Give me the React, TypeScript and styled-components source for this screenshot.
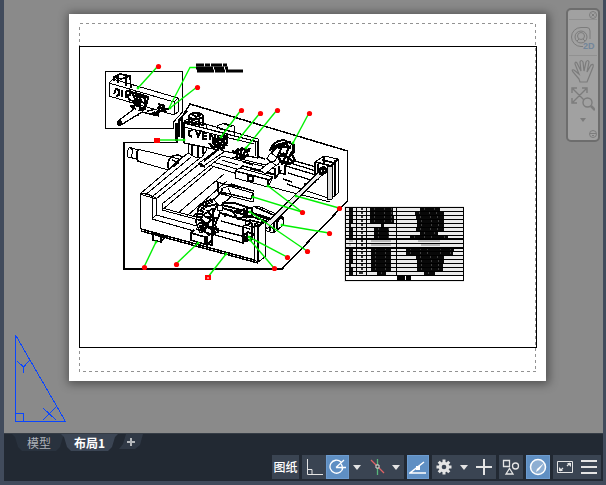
import React from "react";
import styled, { createGlobalStyle, css } from "styled-components";

const GlobalStyle = createGlobalStyle`
  * { box-sizing: border-box; }
  body { margin: 0; background: #3c4656; }
  button { font: inherit; color: inherit; border: 0; padding: 0; background: none; }
  svg { display: block; }
`;

const Shell = styled.div`
  display: flex;
  flex-direction: column;
  min-height: 100vh;
  padding: 0 3px 4px 4px;
  background: #414b5c;
  font: 12px/16px "Noto Sans CJK SC", "Liberation Sans", sans-serif;
  color: #fff;
`;

const Workspace = styled.main`
  position: relative;
  flex: 1;
  padding: 14px 57px 0 65px;
  background: #8a8a8a;
  overflow: hidden;
`;

const Paper = styled.div`
  background: #fff;
  box-shadow: 1px 1px 9px 2px rgba(0, 0, 0, 0.42);
  svg { width: 100%; height: auto; }
`;

const AxisMarker = styled.div`
  position: absolute;
  left: 10px;
  bottom: 10px;
`;

const NavPanel = styled.nav`
  position: absolute;
  top: 8px;
  right: 3px;
  width: 34px;
  display: flex;
  flex-direction: column;
  align-items: center;
  border: 2px solid #6d6d6d;
  border-radius: 5px;
  background: #a1a1a1;
  color: #7c7c7c;
`;

const NavButton = styled.button<{ $height: number; $line?: boolean; $end?: boolean }>`
  width: 28px;
  height: ${(p) => p.$height}px;
  display: flex;
  align-items: center;
  justify-content: ${(p) => (p.$end ? "flex-end" : "center")};
  border-bottom: ${(p) => (p.$line ? "1px solid #919191" : "0")};
`;

const Footer = styled.footer`
  display: flex;
  flex-direction: column;
  background: #222933;
  border-top: 1px solid #353c45;
`;

const TabStrip = styled.div`
  display: flex;
  height: 17px;
  padding-left: 8px;
`;

const Tab = styled.button<{ $active?: boolean }>`
  height: 17px;
  width: ${(p) => (p.$active ? 57 : 54)}px;
  margin-right: ${(p) => (p.$active ? 0 : -5)}px;
  color: ${(p) => (p.$active ? "#fff" : "#adb1b8")};
  font-weight: ${(p) => (p.$active ? 700 : 400)};
  line-height: 16px;
  background: ${(p) => (p.$active ? "#3b4554" : "#29323e")};
  clip-path: polygon(0 0, 100% 0, calc(100% - 3px) 3px, calc(100% - 6px) 13px, calc(100% - 10px) 100%, 10px 100%, 6px 13px, 3px 3px);
`;

const AddTab = styled.button`
  width: 24px;
  height: 15px;
  margin-left: 1px;
  display: flex;
  align-items: center;
  justify-content: center;
  background: #303946;
  color: #b5b8bc;
  clip-path: polygon(7px 0, 100% 0, calc(100% - 3px) 11px, calc(100% - 8px) 100%, 0 100%, 4px 10px);
`;

const StatusBar = styled.div`
  display: flex;
  justify-content: flex-end;
  gap: 3px;
  padding: 4px 2px 2px;
`;

const Group = styled.div`
  display: flex;
  background: #3a4452;
`;

const StatusButton = styled.button<{ $width?: number; $on?: boolean }>`
  width: ${(p) => p.$width ?? 24}px;
  height: 24px;
  display: flex;
  align-items: center;
  justify-content: center;
  color: #e4e4e4;
  overflow: hidden;
  white-space: nowrap;
  ${(p) => p.$on && css`
    background: #5f8fc3;
    border: 1px solid #6c9bcf;
    color: #fff;
  `}
`;

const PaperLabel = styled(StatusButton)`
  font-weight: 500;
  color: #fff;
`;

type Point = [number, number];
const leaders: { at: Point; to: Point[]; box?: boolean }[] = [
  { at: [158, 66], to: [[138, 88]] },
  { at: [197, 87], to: [[170, 108]] },
  { at: [157, 140], to: [[184, 140]], box: true },
  { at: [241, 110], to: [[221, 137]] },
  { at: [260, 113], to: [[238, 140]] },
  { at: [277, 110], to: [[246, 148]] },
  { at: [309, 113], to: [[293, 143]] },
  { at: [302, 212], to: [[268, 186], [253, 197]] },
  { at: [339, 208], to: [[296, 196]] },
  { at: [329, 233], to: [[282, 225]] },
  { at: [307, 251], to: [[250, 212]] },
  { at: [287, 257], to: [[249, 237]] },
  { at: [274, 268], to: [[250, 240]] },
  { at: [144, 267], to: [[156, 242]] },
  { at: [176, 264], to: [[198, 243]] },
  { at: [208, 277], to: [[226, 254]], box: true },
];

/* Left edge and width of the lettering in the last two columns of each row. */
const partRows: [number, number, number, number][] = [
  [370, 23, 420, 20], [370, 23, 415, 29], [370, 24, 416, 28], [370, 24, 417, 27],
  [381, 3, 417, 27], [374, 15, 416, 28], [374, 15, 420, 18], [374, 15, 410, 38],
  [371, 20, 418, 22], [371, 20, 421, 19], [371, 20, 406, 48], [371, 20, 406, 47],
  [371, 20, 416, 28], [371, 20, 417, 27], [371, 20, 417, 26], [371, 20, 417, 26],
  [377, 9, 424, 11],
];

function Lettering({ x, y, w, pale }: { x: number; y: number; w: number; pale?: boolean }) {
  return (
    <g>
      <path d={`M${x} ${y + 2}h${w}`} stroke={pale ? "#888" : "#080808"} strokeWidth={pale ? 1 : 4} />
      {!pale && w > 8 && <path d={`M${x + 4} ${y + 2}h${w - 4}`} stroke="#777" strokeDasharray="1 9 1 6 1 12" />}
    </g>
  );
}

function PartsList() {
  return (
    <g>
      <path d="M344 206h120v76h-120z" fill="#ebebeb" />
      <path d="M346 276h117v4h-117z" fill="#fff" />
      {partRows.map(([a, aw, b, bw], i) => {
        const y = 207 + i * 4;
        const pale = i === 8 || i === 9;
        return (
          <g key={i}>
            <Lettering x={349} y={y} w={i % 5 === 4 ? 2 : 4} pale={pale} />
            <path d={`M${i === 16 ? 359 : 361} ${y + 2}h${i === 16 ? 4 : 2}`} stroke="#333" strokeWidth="2" />
            <Lettering x={a} y={y} w={aw} pale={pale} />
            <Lettering x={b} y={y} w={bw} pale={pale} />
          </g>
        );
      })}
      <path d="M397 278h14" stroke="#000" strokeWidth="4" strokeDasharray="8 1 5" />
      <g stroke="#000" shapeRendering="crispEdges">
        {Array.from({ length: 18 }, (_, i) => <path key={i} d={`M345 ${207.5 + i * 4}h119`} />)}
        <path d="M345.500 207v73M356.500 207v68M366.500 207v68M396.500 207v68M463.500 207v73M345 280.500h119" />
        <path d="M345 239h119M345 248h119" strokeWidth="2" />
      </g>
    </g>
  );
}

function InsetDetail() {
  return (
    <g>
      <path d="M105.500 71.500H182.500V112L173.500 122V128.500H105.500Z" />
      <path d="M109 83L113 79L178 98L174 102Z" />
      <path d="M109 83V96L174 115L178 112V98M174 102V115" />
      <path d="M114 81V77L120 74L130 76L131 88M118 75V83M126 76V86M114 77L121 79L130 76" strokeWidth="1.700" />
      <path d="M114 94l2-5 3 1v5l-3 1M122 90v7M126 91v7M126 91h4v4h-4l5 6M132 93l4 8 2-7" strokeWidth="2" />
      <path d="M131 92l8 2 9 3-1 6-4 7-7 2-5-6 7-1-5-4 9-1M134 107l4 9M140 93v18M145 98v12M136 91l2 14M133 101l13 2M135 105l10 4M134 96l12 2" strokeWidth="2" />
      <path d="M134 109L118 121L121 125L142 112" fill="#fff" strokeWidth="1.300" />
      <circle cx="119.500" cy="123" r="2" strokeWidth="2" />
      <path d="M142 112l8 2 7-2M147 111L153 110M149 114h5" strokeWidth="1.500" />
      <path d="M158 104l7 2M157 108l12 1M155 113l11-4M160 104l-2 11M163 105l3 8M154 112l5 4M153 115h6" strokeWidth="2.300" />
    </g>
  );
}

function Machine() {
  return (
    <g>
      <path d="M124 142.500H177V125L190 104L347.500 151V201L282 269H124Z" strokeWidth="1.500" />
      {/* drive cylinder */}
      <path d="M137 149L179 159L168 170L137 161Z" fill="#fff" />
      <path d="M137 150L130 147Q126 151 128 157L137 159M130 147l3 4-2 6" fill="#fff" />
      <path d="M139 149Q134 155 138 161M171 157q-5 6-2 13M171 157q7-4 11 0l-8 10M172 160l7 3" strokeWidth="1.500" />
      {/* left rails */}
      <path d="M140 194L188 153M144 196L191 157M153 196L200 158M156 199L204 160M162 204L222 156M162 210L213 167M178 213L224 174M187 216L227 181M192 217L228 187" />
      <path d="M140 194V229M140 194L156 199V215M152 198V219L156 215M162 204V210L199 220M152 219L194 231M156 215L197 226M162 208L200 218M140 194l5-1 11 5" />
      <path d="M141 229L258 261M141 231L258 263" strokeWidth="1.500" />
      <path d="M153 233V240L161 242L166 236M161 235V242M154 234l12 3" strokeWidth="1.500" />
      {/* cross rails */}
      <path d="M209 165L244 176M213 162L250 173M222 156L274 169M232 157L270 166M222 160L238 165M228 187L250 194M230 184L252 191M226 193L253 201M253 193V202M242 179L286 191M286 191L330 202M250 169L274 175" />
      <path d="M243 162l10 3M253 155l12 4M288 159L316 167M287 162L316 171M286 166L316 175M288 173L311 180M287 184L304 190M283 179L292 182" strokeWidth="1.300" />
      {/* rear column */}
      <path d="M188 124V153L195 157H202L206 151V124Z" fill="#fff" />
      <path d="M192 128V155M198 130V157M203 127V154" strokeWidth="1.500" />
      <ellipse cx="196" cy="116" rx="7" ry="3" fill="#fff" strokeWidth="2" />
      <path d="M189 116V124M203 116V126M192 114l4 3 5-2M192 119v5M199 120v6M194 113l6 1M190 122l13 3" strokeWidth="2" />
      <path d="M179 120V137M182 117V138M179 120L187 111M176 123V141M184 122h4M184 122V142" strokeWidth="1.500" />
      {/* upper beam */}
      <path d="M184 123L258 142V158L184 143Z" fill="#fff" strokeWidth="1.300" />
      <path d="M184 121L188 119M188 119L258 139M258 139V158M255 142V156M184 127L254 144M217 129V126L224 123L234 126V136M220 129l12 3M224 124l8 3" />
      <path d="M193 130l-4 1v4l3 2M196 130l2 7 3-7M207 133h-4v6h4M204 136h3M210 140v-6l5 6v-6" strokeWidth="2" />
      <path d="M212 139l12 1 3-5v8l-5 5-8-1 5-4-6-3 10 0-5 9M218 136v12M224 134v15M214 145h13M212 142l11 8M220 137l7 9M209 143l5 6" strokeWidth="2.300" />
      <path d="M218 149L199 163L202 167L224 152" fill="#fff" />
      <path d="M204 161L219 149M201 164l4 3M199 163l3 4" strokeWidth="1.800" />
      <path d="M233 154l4-4 8-1 5 2M235 157l8 2 5-5M238 148l-1 9M242 147l-2 12M246 149l-4 9M232 151l14 5M250 148l-4 5" strokeWidth="2.200" />
      {/* clamp blocks */}
      <path d="M235 171L240 168L273 177L268 187L235 178Z" fill="#fff" />
      <path d="M235 171L270 180M268 187V181L273 177M248 176h5v5h-5zM240 168l3-2 31 8" strokeWidth="1.500" />
      <path d="M221 189L228 186L253 193V202L221 194Z" fill="#fff" />
      <path d="M221 192L251 199M228 186L231 184L254 191M251 199L253 193" strokeWidth="1.300" />
      <path d="M248 208L258 206L283 217V225L274 233L245 225Z" fill="#fff" />
      <path d="M249 212L279 221M283 217L274 222V233M277 220V229M256 215L270 220M268 226l7 3M270 219v12M255 207l28 12M240 213l32 10" strokeWidth="1.800" />
      {/* rear hand wheel */}
      <path d="M270 151Q272 141 284 140L294 145L294 153M271 154Q276 144 288 144M270 149L279 144L291 142M278 148L289 146" strokeWidth="2" />
      <path d="M272 149Q281 143 293 148" strokeWidth="3" strokeDasharray="2 1" />
      <path d="M282 147l-4 8 3 7 9 2 5-4-4-7M279 153l11 5M289 147l-7 18M276 160l15 3M292 151l-7 16M283 153l10 9M277 156h10M293 145v9" strokeWidth="2.200" />
      <path d="M260 170L270 162Q265 157 271 153L278 158Q282 164 275 166L265 174Z" fill="#fff" />
      <path d="M270 162q6 1 7-6M266 158l11 8" />
      <path d="M279 166V173L285 174V165M275 168v10M281 170l-6 9" strokeWidth="1.800" />
      {/* front hand wheel */}
      <path d="M216 181l4 2 22 5M218 182v10l9 3M223 189l-9 11 6 6 12-10-4-8" strokeWidth="1.300" />
      <path d="M214 199L204 202L198 209L196 222L200 233" strokeWidth="1.500" />
      <path d="M212 200L205 204L201 213L200 222L204 233" strokeWidth="5" strokeDasharray="2 1" />
      <path d="M205 207l12-3 3 9-5 12 3 7-9 3-8-7 10-8-8-5 9-6M207 210l9 13M217 205l-12 25M205 217l12 1M201 223l15 9M213 208v25M207 226l12 3M199 216l10 12" strokeWidth="1.800" />
      <circle cx="220" cy="208" r="3" fill="#fff" />
      <path d="M194 230l-3 3v7l16 5 5-5V229M191 233l14 4v7M207 236v8l5 1v-9M196 229l18 6" strokeWidth="1.600" />
      <path d="M222 205l31 8M222 208l29 9M220 213l31 9M222 203h12l16 5M231 209l7 10 6-2v-9M234 211h8M226 213l-1 4M247 207l5 2v7l-6 1z" strokeWidth="1.900" />
      <path d="M212 234L243 243M214 229L242 236M221 221L250 229M243 244V226L252 223V240" strokeWidth="1.300" />
      {/* right bracket */}
      <path d="M315 162L324 156L338 159V193L331 199L304 190V184L316 182Z" fill="#fff" />
      <path d="M327 166H332V199H327Z" fill="#ddd" />
      <path d="M315 162L331 166L338 159M315 162V182M318 164V180M324 156V165M335 160V195M322 160l13 3" strokeWidth="1.700" />
      {/* lead screw */}
      <path d="M264 225L322 169L325 172L267 229Z" fill="#eee" />
      <path d="M264 225L322 169M267 229L325 172" strokeWidth="1.200" />
      <path d="M319 169l5-2 3 4-5 4zM320 168v7M323 167v7" strokeWidth="2.200" />
      {/* front bracket */}
      <path d="M254 224L265 221V257L258 262L254 260Z" fill="#fff" />
      <path d="M258 226V262M254 224L258 227L265 221M249 220l13 3M252 227l12-4M255 218l7 2" strokeWidth="1.700" />
      <path d="M244 235l4-3 5 2-2 6-6 1zM243 237h10M247 233v8" strokeWidth="2" />
    </g>
  );
}

function Drawing() {
  return (
    <svg viewBox="69 14 477 367" role="img" aria-label="Machine assembly layout">
      <g fill="none" shapeRendering="crispEdges">
        <path d="M79.500 23.500H535.500V371.500H79.500Z" stroke="#929292" strokeDasharray="3 3" />
        <path d="M79.500 46.500H536.500V347.500H79.500Z" stroke="#000" />
      </g>
      <g fill="none" stroke="#000" strokeLinejoin="round" shapeRendering="crispEdges">
        <InsetDetail />
        <Machine />
      </g>
      <g stroke="#000" fill="none">
        <path d="M196 65h31" strokeWidth="3" strokeDasharray="8 1 5 1 11 1" />
        <path d="M196 68h32M197 71h46" strokeWidth="3" strokeDasharray="17 1 10 1" />
      </g>
      <PartsList />
      <path d="M196 67.500H190L169 108" fill="none" stroke="#0f0" strokeWidth="1.300" />
      {leaders.map(({ at, to, box }) => (
        <g key={at.join()}>
          {to.map((end) => (
            <g key={end.join()} stroke="#00f000">
              <path d={`M${at[0]} ${at[1]}L${end[0]} ${end[1]}`} strokeWidth="1.400" />
              <circle cx={end[0]} cy={end[1]} r="1" fill="#0f0" />
            </g>
          ))}
          {box
            ? <rect x={at[0] - 3} y={at[1] - 2} width="6" height="5" fill="#f00" />
            : <circle cx={at[0] + 0.5} cy={at[1] + 0.5} r="2.600" fill="#f00" />}
        </g>
      ))}
      <path d="M208 277v2" stroke="#fff" />
    </svg>
  );
}

const Caret = () => (
  <svg width="8" height="5"><path d="M0 0h8L4 5z" fill="currentColor" /></svg>
);

function NavBar() {
  return (
    <NavPanel aria-label="Navigation">
      <NavButton $height={10} $line $end aria-label="Close">
        <svg width="8" height="8" fill="none" stroke="currentColor">
          <circle cx="4" cy="4" r="3.500" /><path d="M2.500 2.500l3 3M5.500 2.500l-3 3" />
        </svg>
      </NavButton>
      <NavButton $height={36} $line aria-label="2D wheel">
        <svg width="26" height="26" fill="none" stroke="currentColor">
          <path d="M13 21.500H11A9.500 9.500 0 1 1 11 2.500H17Q20 2.500 20 6V14" />
          <circle cx="11" cy="12" r="6" /><circle cx="11" cy="11" r="3.500" />
          <path d="M7 16l2-2M13 14l2 2" />
          <text x="13" y="24" fill="#71859a" stroke="none" fontSize="9" fontWeight="700" fontFamily="Liberation Sans, sans-serif">2D</text>
        </svg>
      </NavButton>
      <NavButton $height={30} aria-label="Pan">
        <svg width="24" height="25" viewBox="0 0 24 25" fill="none" stroke="currentColor" strokeWidth="1.200">
          <path d="M8 20L2 13Q0 10 3 11L8 15L4 5Q4 2 6 4L10 12L9 3Q10 0 12 3L13 12L15 3Q17 0 18 3L16 13L20 6Q23 4 22 8L18 18L16 23H9Z" />
        </svg>
      </NavButton>
      <NavButton $height={26} aria-label="Zoom extents">
        <svg width="24" height="24" fill="none" stroke="currentColor">
          <path d="M2 2l13 13M15 2L2 15M1 6V1h5M11 1h5v5M1 11v5h5" strokeWidth="1.400" />
          <circle cx="16.500" cy="15.500" r="4.500" fill="#a1a1a1" strokeWidth="1.400" />
          <path d="M20 19l4 4" strokeWidth="2.500" />
        </svg>
      </NavButton>
      <NavButton $height={16} aria-label="Zoom options">
        <svg width="6" height="4"><path d="M0 0h6L3 4z" fill="currentColor" /></svg>
      </NavButton>
      <NavButton $height={12} $end aria-label="Customize">
        <svg width="8" height="8" fill="none" stroke="currentColor">
          <circle cx="4" cy="4" r="3.500" /><path d="M1 3.500h6M3 5.500h2" />
        </svg>
      </NavButton>
    </NavPanel>
  );
}

export default function App() {
  return (
    <Shell>
      <GlobalStyle />
      <Workspace>
        <Paper><Drawing /></Paper>
        <AxisMarker>
          <svg width="53" height="90" fill="none" stroke="#0a46ff" shapeRendering="crispEdges">
            <path d="M1.500 2V88.500H52" />
            <path d="M1.500 2L51.500 88.500" />
            <path d="M1 80.500H9.500V88M3 28l6.500 6L16 27M9.500 34v6M29 75l13 12M29 87l13-13" />
          </svg>
        </AxisMarker>
        <NavBar />
      </Workspace>
      <Footer>
        <TabStrip>
          <Tab>模型</Tab>
          <Tab $active>布局1</Tab>
          <AddTab aria-label="New layout">
            <svg width="8" height="8"><path d="M4 0v8M0 4h8" stroke="currentColor" strokeWidth="2" /></svg>
          </AddTab>
        </TabStrip>
        <StatusBar>
          <Group><PaperLabel $width={27}>图纸</PaperLabel></Group>
          <Group>
            <StatusButton $width={24} aria-label="Ortho">
              <svg width="17" height="18" fill="none" stroke="currentColor">
                <path d="M1.500 1V16.500H17M1 11.500h5v5" />
              </svg>
            </StatusButton>
            <StatusButton $width={23} $on aria-label="Polar tracking">
              <svg width="18" height="18" fill="none" stroke="currentColor" strokeWidth="1.300">
                <path d="M12 4A6.500 6.500 0 1 0 14 9M7 9.500H17M7 9.500L15 2M12 6q2 2 1 6" />
              </svg>
            </StatusButton>
            <StatusButton $width={16} aria-label="Tracking options"><Caret /></StatusButton>
            <StatusButton $width={23} aria-label="Isometric drafting">
              <svg width="16" height="18" fill="none">
                <path d="M8.500 1v16" stroke="#58b87c" strokeWidth="1.300" />
                <path d="M2 2l13 13" stroke="#e06465" strokeWidth="1.300" />
                <path d="M7 7h3v3H7z" fill="#333" stroke="#ddd" />
              </svg>
            </StatusButton>
            <StatusButton $width={16} aria-label="Isometric options"><Caret /></StatusButton>
          </Group>
          <StatusButton $width={22} $on aria-label="Object snap tracking">
            <svg width="18" height="16" fill="none" stroke="currentColor" strokeWidth="1.500">
              <path d="M17 14H1L15 3" /><path d="M7 7h4v4H7z" fill="#fff" stroke="none" />
            </svg>
          </StatusButton>
          <Group>
            <StatusButton $width={23} aria-label="Workspace settings">
              <svg width="16" height="16" viewBox="-8 -8 16 16">
                <path d="M0-7.500V7.500M-7.500 0H7.500M-5.300-5.300L5.300 5.300M5.300-5.300L-5.300 5.300" stroke="currentColor" strokeWidth="3" />
                <circle r="5.300" fill="currentColor" /><circle r="2.300" fill="#3a4452" />
              </svg>
            </StatusButton>
            <StatusButton $width={17} aria-label="Workspace options"><Caret /></StatusButton>
            <StatusButton $width={24} aria-label="Annotation monitor">
              <svg width="16" height="16"><path d="M8 0v16M0 8h16" stroke="currentColor" strokeWidth="2" /></svg>
            </StatusButton>
          </Group>
          <Group>
            <StatusButton aria-label="Isolate objects">
              <svg width="18" height="18" fill="none" stroke="currentColor" strokeWidth="1.300">
                <path d="M1.500 2.500h6v6h-6zM4 16L7.500 10.500L11 16z" /><circle cx="13.500" cy="8" r="3" />
              </svg>
            </StatusButton>
          </Group>
          <StatusButton $width={24} $on aria-label="Graphics performance">
            <svg width="18" height="18" fill="none" stroke="currentColor">
              <circle cx="9" cy="9" r="7.500" fill="#8eafd3" strokeWidth="1.500" />
              <path d="M15 5L10 12L7 14L8 11Z" fill="#fff" stroke="none" />
            </svg>
          </StatusButton>
          <Group>
            <StatusButton aria-label="Clean screen">
              <svg width="16" height="12" fill="none" stroke="currentColor">
                <path d="M.5.500h15v11H.500z" /><path d="M10 5l3-3M6 7L3 10" strokeWidth="1.300" />
                <path d="M10 2h4v4zM2 6v4h4z" fill="currentColor" stroke="none" />
              </svg>
            </StatusButton>
            <StatusButton aria-label="Customization">
              <svg width="16" height="14"><path d="M0 1h16M0 7h16M0 13h16" stroke="currentColor" strokeWidth="2" /></svg>
            </StatusButton>
          </Group>
        </StatusBar>
      </Footer>
    </Shell>
  );
}
